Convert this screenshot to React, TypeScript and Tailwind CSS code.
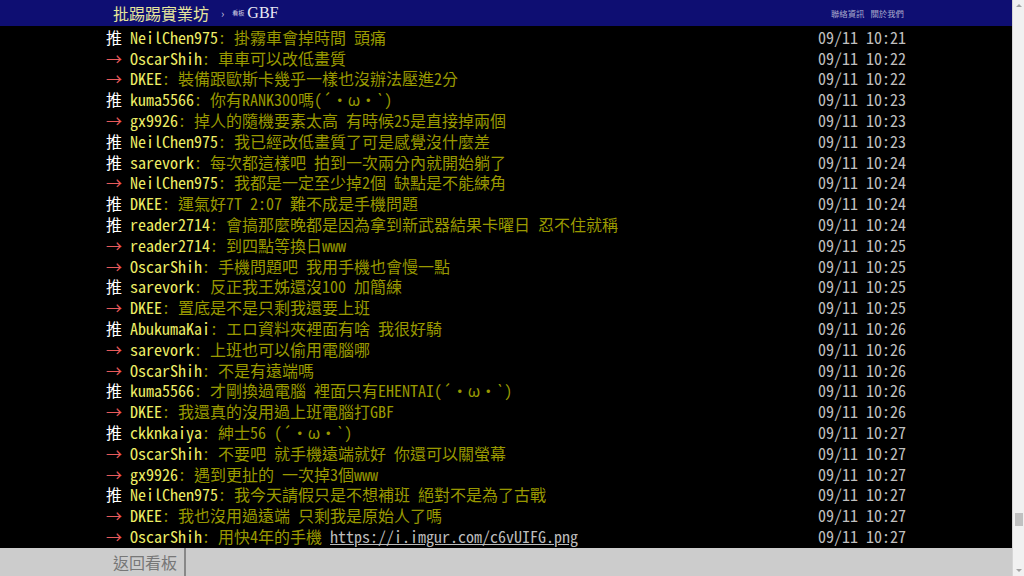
import React from "react";

type Row = [string, string, string, string];

const rows: Row[] = [
  ["推", "NeilChen975", "掛霧車會掉時間 頭痛", "09/11 10:21"],
  ["→", "OscarShih", "車車可以改低畫質", "09/11 10:22"],
  ["→", "DKEE", "裝備跟歐斯卡幾乎一樣也沒辦法壓進2分", "09/11 10:22"],
  ["推", "kuma5566", "你有RANK300嗎(´・ω・`)", "09/11 10:23"],
  ["→", "gx9926", "掉人的隨機要素太高 有時候25是直接掉兩個", "09/11 10:23"],
  ["推", "NeilChen975", "我已經改低畫質了可是感覺沒什麼差", "09/11 10:23"],
  ["推", "sarevork", "每次都這樣吧 拍到一次兩分內就開始躺了", "09/11 10:24"],
  ["→", "NeilChen975", "我都是一定至少掉2個 缺點是不能練角", "09/11 10:24"],
  ["推", "DKEE", "運氣好7T 2:07 難不成是手機問題", "09/11 10:24"],
  ["推", "reader2714", "會搞那麼晚都是因為拿到新武器結果卡曜日 忍不住就稱", "09/11 10:24"],
  ["→", "reader2714", "到四點等換日www", "09/11 10:25"],
  ["→", "OscarShih", "手機問題吧 我用手機也會慢一點", "09/11 10:25"],
  ["推", "sarevork", "反正我王姊還沒100 加簡練", "09/11 10:25"],
  ["→", "DKEE", "置底是不是只剩我還要上班", "09/11 10:25"],
  ["推", "AbukumaKai", "エロ資料夾裡面有啥 我很好騎", "09/11 10:26"],
  ["→", "sarevork", "上班也可以偷用電腦哪", "09/11 10:26"],
  ["→", "OscarShih", "不是有遠端嗎", "09/11 10:26"],
  ["推", "kuma5566", "才剛換過電腦 裡面只有EHENTAI(´・ω・`)", "09/11 10:26"],
  ["→", "DKEE", "我還真的沒用過上班電腦打GBF", "09/11 10:26"],
  ["推", "ckknkaiya", "紳士56 (´・ω・`)", "09/11 10:27"],
  ["→", "OscarShih", "不要吧 就手機遠端就好 你還可以關螢幕", "09/11 10:27"],
  ["→", "gx9926", "遇到更扯的 一次掉3個www", "09/11 10:27"],
  ["推", "NeilChen975", "我今天請假只是不想補班 絕對不是為了古戰", "09/11 10:27"],
  ["→", "DKEE", "我也沒用過遠端 只剩我是原始人了嗎", "09/11 10:27"],
  ["→", "OscarShih", "用快4年的手機 ", "09/11 10:27"],
];

const mono = {
  fontFamily:
    '"Noto Sans Mono CJK TC", "Liberation Mono", "Noto Sans CJK TC", monospace',
};

export default function App() {
  return (
    <div className="flex h-[576px] w-[1024px] overflow-hidden bg-black">
      <div className="flex h-full w-[1012px] flex-col">
        {/* top bar */}
        <div
          className="flex h-[26px] shrink-0 justify-center bg-[#0e0e72]"
          style={{ fontFamily: '"Noto Sans CJK TC", sans-serif' }}
        >
          <div className="flex w-[800px] items-center justify-between">
            <div className="flex items-center">
              <span className="pl-[7px] text-[16px] leading-none text-[#e6e69c]">
                批踢踢實業坊
              </span>
              <span className="ml-[12px] text-[11px] leading-none text-[#c8c8e0]">›</span>
              <span className="ml-[8px] text-[6px] leading-none text-[#d8d8e8]">看板</span>
              <span
                className="ml-[3px] text-[16px] leading-none text-[#e8e8f4]"
                style={{ fontFamily: '"Liberation Serif", serif' }}
              >
                GBF
              </span>
            </div>
            <div className="flex items-center gap-[6px] pr-[2px] text-[8.4px] leading-none text-[#a8a8cc]">
              <span>聯絡資訊</span>
              <span>關於我們</span>
            </div>
          </div>
        </div>

        {/* content */}
        <div className="flex flex-1 justify-center overflow-hidden pt-[0.8px]">
          <div className="w-[800px] text-[16px] leading-[20.8px]" style={mono}>
            {rows.map((r, i) => (
              <div key={i} className="flex h-[20.8px] whitespace-pre">
                <span className={r[0] === "推" ? "text-white" : "text-[#e85a5a]"}>
                  {r[0] + " "}
                </span>
                <span className="text-[#eeee66]">{r[1]}</span>
                <span className="text-[#999900]">
                  {": " + r[2]}
                  {i === rows.length - 1 && (
                    <span className="text-[#bcbcbc] underline">
                      https://i.imgur.com/c6vUIFG.png
                    </span>
                  )}
                </span>
                <span className="ml-auto text-[#c0c0c0]">{" " + r[3]}</span>
              </div>
            ))}
          </div>
        </div>

        {/* bottom bar */}
        <div
          className="flex h-[28px] shrink-0 justify-center bg-[#cccccc]"
          style={{ fontFamily: '"Noto Sans CJK TC", sans-serif' }}
        >
          <div className="flex w-[800px]">
            <div className="flex items-center border-r-2 border-[#888] px-[7px] text-[16px] leading-none text-[#777]">
              返回看板
            </div>
          </div>
        </div>
      </div>

      {/* scrollbar */}
      <div className="relative h-full w-[12px] border-l border-[#d6d6d6] bg-[#f1f1f1]">
        <div className="absolute left-[3px] top-[4px] h-0 w-0 border-x-[3px] border-b-[3px] border-x-transparent border-b-[#a3a3a3]" />
        <div className="absolute left-[2px] top-[513px] h-[13px] w-[8px] bg-[#c1c1c1]" />
        <div className="absolute bottom-[4px] left-[3px] h-0 w-0 border-x-[3px] border-t-[3px] border-x-transparent border-t-[#a3a3a3]" />
      </div>
    </div>
  );
}
